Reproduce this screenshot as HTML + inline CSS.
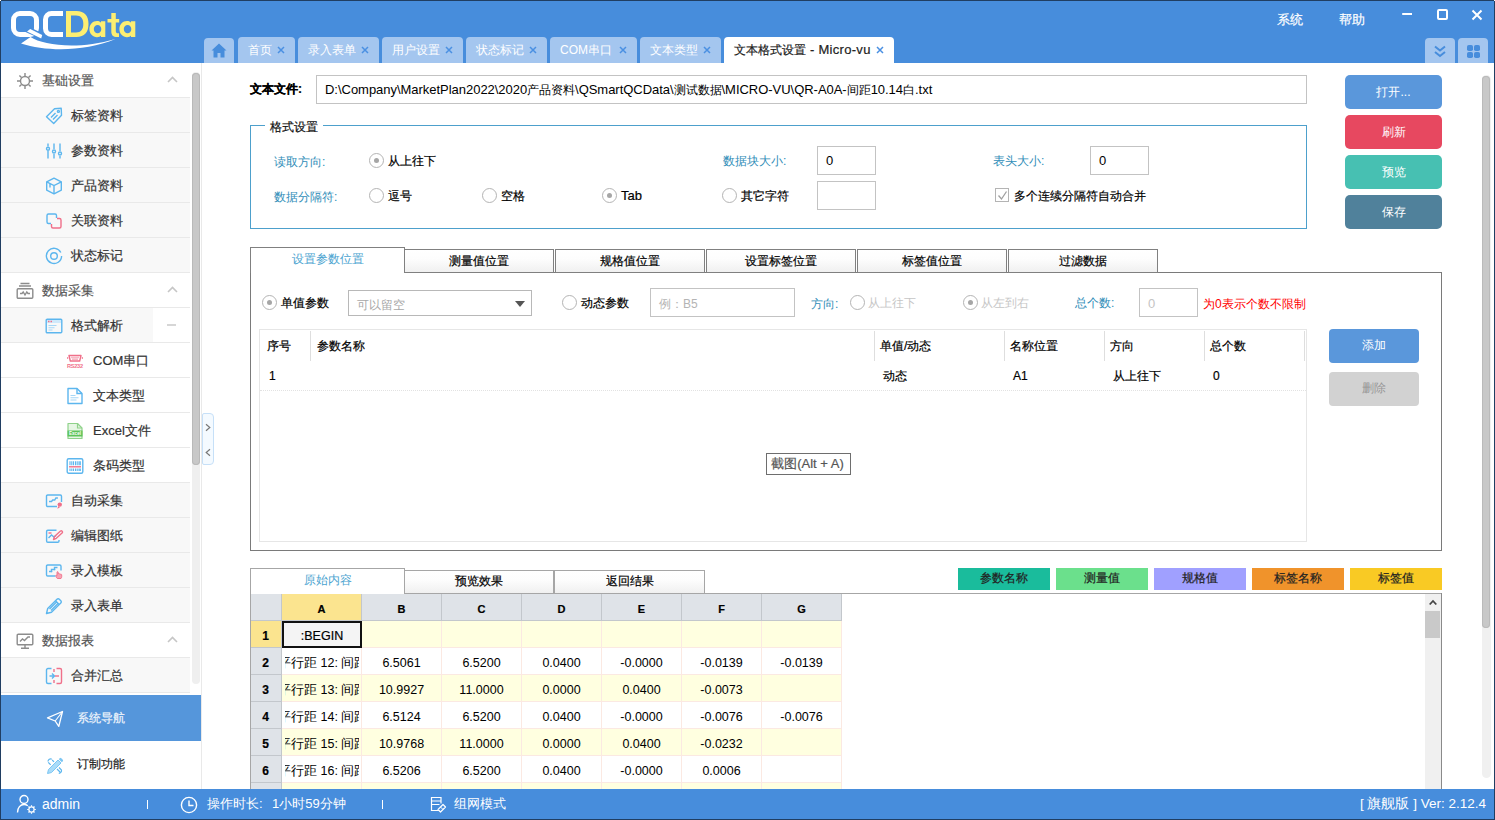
<!DOCTYPE html>
<html lang="zh">
<head>
<meta charset="utf-8">
<title>QCData</title>
<style>
*{box-sizing:border-box;margin:0;padding:0}
html,body{width:1495px;height:820px;overflow:hidden;background:#fff}
body{font-family:"Liberation Sans",sans-serif;font-size:13px;color:#000;position:relative;-webkit-text-stroke:.200px currentColor}
.abs{position:absolute}
.t{position:absolute;white-space:nowrap;line-height:16px;height:16px}
/* header */
#hdr{left:0;top:0;width:1495px;height:63px;background:#478ddc}
.tab{-webkit-text-stroke:0;position:absolute;top:37px;height:26px;background:#a4c6ef;border-radius:4px 4px 0 0;color:#fff;font-size:12px;line-height:26px;white-space:nowrap;padding-left:10px}
.tab .x{position:absolute;right:10.500px;top:9px}
.tab.on{background:#fff;color:#222;-webkit-text-stroke:.200px #222}
/* sidebar */
#side{left:0;top:63px;width:201px;height:726px;background:#fff}
.row{position:absolute;left:0;width:190px;height:35px;border-bottom:1px solid #e9e9e9;background:#f8f8f8;color:#333;font-size:13px}
.row.h{background:#fff;color:#555}
.row .lb{position:absolute;top:10px;line-height:16px;white-space:nowrap}
.row svg{position:absolute}
/* status */
#main .t{margin-top:1px}
.cj{font-size:12px}
#stat{-webkit-text-stroke:0;left:0;top:789px;width:1495px;height:31px;background:#478ddc;color:#fff;font-size:14px}
</style>
</head>
<body>
<!-- HEADER -->
<div id="hdr" class="abs">
  <svg class="abs" style="left:0;top:0" width="240" height="63" viewBox="0 0 240 63">
    <!-- Q -->
    <rect x="13.500" y="13.500" width="23" height="21" rx="6.500" fill="none" stroke="#fff" stroke-width="5"/>
    <path d="M25.500 32l5-4.500 13 6.500-1.500 5.500z" fill="#478ddc"/>
    <path d="M27 31.500l3.200-2.500 12 6-1 3.500z" fill="#fff"/>
    <!-- C -->
    <path d="M63 13.500h-11.500a6 6 0 0 0-6 6v9a6 6 0 0 0 6 6h11.500" fill="none" stroke="#fff" stroke-width="5"/>
    <!-- swoosh -->
    <path d="M21 43.500l9.500-6.500c13 8.500 48 13 85 2c-30 12.500-68 13-94.500 4.500z" fill="#fff"/>
    <!-- D -->
    <path d="M66 11h10.500c8 0 12 5 12 13s-4 13-12 13h-10.500zM71 15.500v17h5c5 0 7.300-3 7.300-8.500s-2.300-8.500-7.300-8.500z" fill="#fcee72" fill-rule="evenodd"/>
    <!-- a -->
    <path d="M97 21c2 0 3.300.7 4 1.700v-1.400h4.300v15.700h-4.300v-1.400c-.7 1-2 1.700-4 1.700-4.300 0-7.600-3.500-7.600-8.200s3.300-8.100 7.600-8.100zM97.600 25c-2.200 0-3.800 1.700-3.800 4.100s1.600 4.200 3.800 4.200 3.700-1.800 3.700-4.200-1.500-4.100-3.700-4.100z" fill="#fcee72" fill-rule="evenodd"/>
    <!-- t -->
    <path d="M111.300 13h4.500v6h3.400v3.600h-3.400v8.400c0 1.800.9 2.500 3.200 2.300v3.700c-5.500.6-7.700-1.300-7.700-5.800v-8.600h-3.800v-3.600h3.800z" fill="#fcee72"/>
    <!-- a -->
    <path d="M127 21c2 0 3.300.7 4 1.700v-1.400h4.300v15.700h-4.300v-1.400c-.7 1-2 1.700-4 1.700-4.300 0-7.600-3.500-7.600-8.200s3.300-8.100 7.600-8.100zM127.600 25c-2.200 0-3.800 1.700-3.800 4.100s1.600 4.200 3.800 4.200 3.700-1.800 3.700-4.200-1.500-4.100-3.700-4.100z" fill="#fcee72" fill-rule="evenodd"/>
  </svg>
  <!-- tabs -->
  <div class="tab" style="left:204px;width:30px;padding:0;top:38px;height:25px">
    <svg class="abs" style="left:7px;top:5px" width="16" height="15" viewBox="0 0 16 15"><path d="M8 0.500l7.500 7h-2v7h-4v-4.500h-3v4.500h-4v-7h-2z" fill="#478ddc"/></svg>
  </div>
  <div class="tab" style="left:238px;width:57px">首页<svg class="x" width="8" height="8" viewBox="0 0 8 8"><path d="M1 1l6 6M7 1l-6 6" stroke="#4a90e2" stroke-width="1.500" fill="none"/></svg></div>
  <div class="tab" style="left:298px;width:81px">录入表单<svg class="x" width="8" height="8" viewBox="0 0 8 8"><path d="M1 1l6 6M7 1l-6 6" stroke="#4a90e2" stroke-width="1.500" fill="none"/></svg></div>
  <div class="tab" style="left:382px;width:81px">用户设置<svg class="x" width="8" height="8" viewBox="0 0 8 8"><path d="M1 1l6 6M7 1l-6 6" stroke="#4a90e2" stroke-width="1.500" fill="none"/></svg></div>
  <div class="tab" style="left:466px;width:81px">状态标记<svg class="x" width="8" height="8" viewBox="0 0 8 8"><path d="M1 1l6 6M7 1l-6 6" stroke="#4a90e2" stroke-width="1.500" fill="none"/></svg></div>
  <div class="tab" style="left:550px;width:87px">COM串口<svg class="x" width="8" height="8" viewBox="0 0 8 8"><path d="M1 1l6 6M7 1l-6 6" stroke="#4a90e2" stroke-width="1.500" fill="none"/></svg></div>
  <div class="tab" style="left:640px;width:81px">文本类型<svg class="x" width="8" height="8" viewBox="0 0 8 8"><path d="M1 1l6 6M7 1l-6 6" stroke="#4a90e2" stroke-width="1.500" fill="none"/></svg></div>
  <div class="tab on" style="left:724px;width:170px">文本格式设置<span style="font-size:13px;letter-spacing:.300px"> - Micro-vu</span><svg class="x" width="8" height="8" viewBox="0 0 8 8"><path d="M1 1l6 6M7 1l-6 6" stroke="#4a90e2" stroke-width="1.500" fill="none"/></svg></div>
  <!-- menu -->
  <div class="t" style="left:1277px;top:12px;color:#fff;font-size:13px">系统</div>
  <div class="t" style="left:1339px;top:12px;color:#fff;font-size:13px">帮助</div>
  <svg class="abs" style="left:1395px;top:5px" width="100" height="20" viewBox="0 0 100 20">
    <path d="M7.200 9h9.800" stroke="#fff" stroke-width="2" fill="none"/>
    <rect x="43" y="5" width="9" height="9" rx="1" fill="none" stroke="#fff" stroke-width="2"/>
    <path d="M77.500 5.500l9 9M86.500 5.500l-9 9" stroke="#fff" stroke-width="2" fill="none"/>
  </svg>
  <div class="tab" style="left:1425px;width:30px;padding:0;top:38px;height:25px">
    <svg class="abs" style="left:9px;top:7px" width="12" height="13" viewBox="0 0 12 13"><path d="M1 1.500l5 4 5-4M1 7l5 4 5-4" stroke="#478ddc" stroke-width="2" fill="none"/></svg>
  </div>
  <div class="tab" style="left:1458px;width:30px;padding:0;top:38px;height:25px">
    <svg class="abs" style="left:9px;top:7px" width="13" height="13" viewBox="0 0 13 13"><rect x="0" y="0" width="6" height="6" rx="1.800" fill="#478ddc"/><rect x="7" y="0" width="6" height="6" rx="1.800" fill="#478ddc"/><rect x="0" y="7" width="6" height="6" rx="1.800" fill="#478ddc"/><rect x="7" y="7" width="6" height="6" rx="1.800" fill="#478ddc"/></svg>
  </div>
</div>

<!-- SIDEBAR -->
<div id="side" class="abs">
<style>
.ic{position:absolute;top:9px;width:18px;height:18px;overflow:visible}
.bl{stroke:#5cb6ee;fill:none;stroke-width:1.4}
.pk{stroke:#f0708a;fill:none;stroke-width:1.4}
.gy{stroke:#8c8c8c;fill:none;stroke-width:1.4}
.chev{position:absolute;left:167px;top:13px}
</style>
<!-- 0 基础设置 -->
<div class="row h" style="top:0">
 <svg class="ic" style="left:16px" viewBox="0 0 18 18"><circle cx="9" cy="9" r="4.500" class="gy" stroke-width="1.900"/><path d="M9 1v3M9 14v3M1 9h3M14 9h3M3.400 3.400l2.100 2.100M12.500 12.500l2.100 2.100M3.400 14.600l2.100-2.100M12.500 5.500l2.100-2.100" class="gy" stroke-width="1.900"/></svg>
 <span class="lb" style="left:42px">基础设置</span>
 <svg class="chev" width="11" height="7" viewBox="0 0 11 7"><path d="M1 6l4.500-4.500 4.500 4.500" stroke="#c6c6c6" stroke-width="1.600" fill="none"/></svg>
</div>
<!-- 1 标签资料 -->
<div class="row" style="top:35px">
 <svg class="ic" style="left:45px" viewBox="0 0 18 18"><path d="M9.500 1.800l6.700-.5.300 7-7.800 8.200-7.200-6.800z" class="bl" stroke-linejoin="round"/><circle cx="13.400" cy="4.400" r="1" class="bl" stroke-width="1"/><path d="M6 10.500l4.500-4.500M8 12.500l4.500-4.500" class="bl"/></svg>
 <span class="lb" style="left:71px">标签资料</span>
</div>
<!-- 2 参数资料 -->
<div class="row" style="top:70px">
 <svg class="ic" style="left:45px" viewBox="0 0 18 18"><path d="M3 1.500v3M3 9v7.500M9 1.500v5.500M9 12v4.500M15 1.500v7.500M15 14v2.500" class="bl" stroke-width="1.500"/><circle cx="3" cy="6.700" r="1.500" class="bl"/><circle cx="9" cy="9.500" r="1.500" class="bl"/><circle cx="15" cy="11.500" r="1.500" class="bl"/></svg>
 <span class="lb" style="left:71px">参数资料</span>
</div>
<!-- 3 产品资料 -->
<div class="row" style="top:105px">
 <svg class="ic" style="left:45px" viewBox="0 0 18 18"><path d="M9 1.200l7.300 3.600v8.400l-7.300 3.600-7.300-3.600v-8.400z" class="bl" stroke-linejoin="round"/><path d="M1.700 4.800l7.300 3.700 7.300-3.700M9 8.500v8M5 6.500v4" class="bl"/></svg>
 <span class="lb" style="left:71px">产品资料</span>
</div>
<!-- 4 关联资料 -->
<div class="row" style="top:140px">
 <svg class="ic" style="left:45px" viewBox="0 0 18 18"><path d="M6 11.500h-2.500a1.500 1.500 0 0 1-1.500-1.500v-6.500a1.500 1.500 0 0 1 1.500-1.500h6.500a1.500 1.500 0 0 1 1.500 1.500v2.500" class="bl"/><path d="M12 6.500h2.500a1.500 1.500 0 0 1 1.500 1.500v6.500a1.500 1.500 0 0 1-1.500 1.500h-6.500a1.500 1.500 0 0 1-1.500-1.500v-2.500" class="pk"/></svg>
 <span class="lb" style="left:71px">关联资料</span>
</div>
<!-- 5 状态标记 -->
<div class="row" style="top:175px">
 <svg class="ic" style="left:45px" viewBox="0 0 18 18"><path d="M15.800 5.500a7.600 7.600 0 1 0 .8 3.500" class="bl" stroke-width="1.600"/><circle cx="9" cy="9" r="3.300" class="bl" stroke-width="1.600"/></svg>
 <span class="lb" style="left:71px">状态标记</span>
</div>
<!-- 6 数据采集 -->
<div class="row h" style="top:210px">
 <svg class="ic" style="left:16px" viewBox="0 0 18 18"><path d="M4.500 1.500h9M3 4h12" class="gy" stroke-width="1.200"/><rect x="1.200" y="6.700" width="15.600" height="9.600" rx="1" class="gy"/><path d="M4 11.500h2l1.200-1.500 1.800 3 1.800-3 1.200 1.500h2" class="gy" stroke-width="1.100"/></svg>
 <span class="lb" style="left:42px">数据采集</span>
 <svg class="chev" width="11" height="7" viewBox="0 0 11 7"><path d="M1 6l4.500-4.500 4.500 4.500" stroke="#c6c6c6" stroke-width="1.600" fill="none"/></svg>
</div>
<!-- 7 格式解析 -->
<div class="row" style="top:245px;background:#fff">
 <div class="abs" style="left:0;top:0;width:153px;height:34px;background:#f8f8f8"></div>
 <svg class="ic" style="left:45px" viewBox="0 0 18 18"><rect x="1.200" y="2.200" width="15.600" height="13.600" rx="1" class="bl" fill="#f2f9fe"/><rect x="2" y="3" width="14" height="3" fill="#cfe9fb"/><path d="M3 4.500h1.500M5.500 4.500h1.500" class="pk" stroke-width="1.300"/><path d="M3.500 8.500h8M3.500 10.800h6M3.500 13h4" stroke="#a6d7f6" fill="none" stroke-width="1.100"/></svg>
 <span class="lb" style="left:71px">格式解析</span>
 <div class="abs" style="left:167px;top:16px;width:9px;height:2px;background:#d6d6d6"></div>
</div>
<!-- 8 COM串口 -->
<div class="row" style="top:280px;background:#fff">
 <svg class="ic" style="left:66px" viewBox="0 0 18 18"><path d="M3 3.500h12l-1.300 5.500h-9.400z" class="pk" stroke-linejoin="round" stroke-width="1.200"/><path d="M1 6h1.200M15.800 6h1.200" class="pk" stroke-width="1.600"/><path d="M5.500 5.500h7M6.500 7.300h5" class="pk" stroke-width=".9" stroke-dasharray="1 1"/><text x="9" y="15.800" font-family="Liberation Sans" font-weight="bold" font-size="5.600" fill="#f0708a" text-anchor="middle" textLength="16">RS232</text></svg>
 <span class="lb" style="left:93px">COM串口</span>
</div>
<!-- 9 文本类型 -->
<div class="row" style="top:315px;background:#fff">
 <svg class="ic" style="left:66px" viewBox="0 0 18 18"><path d="M2 1.500h9l5 5v10h-14z" class="bl" fill="#eef7fe" stroke-linejoin="round"/><path d="M11 1.500v5h5" class="bl"/><path d="M4.500 8.500h5M4.500 10.800h8M4.500 13h6" stroke="#a6d7f6" fill="none" stroke-width="1.100"/></svg>
 <span class="lb" style="left:93px">文本类型</span>
</div>
<!-- 10 Excel文件 -->
<div class="row" style="top:350px;background:#fff">
 <svg class="ic" style="left:66px" viewBox="0 0 18 18"><path d="M2 1.500h9.500l4.500 4.500v10.500h-14z" fill="#e6f6e4" stroke="#8fd28a" stroke-width="1.200" stroke-linejoin="round"/><path d="M11.500 1.500v4.500h4.500" stroke="#8fd28a" fill="none" stroke-width="1.200"/><rect x="1.500" y="8.500" width="15" height="6" fill="#5ec45a"/><text x="9" y="13.300" font-family="Liberation Sans" font-weight="bold" font-size="4.600" fill="#fff" text-anchor="middle">Excel</text></svg>
 <span class="lb" style="left:93px">Excel文件</span>
</div>
<!-- 11 条码类型 -->
<div class="row" style="top:385px;background:#fff">
 <svg class="ic" style="left:66px" viewBox="0 0 18 18"><rect x="1.200" y="1.700" width="15.600" height="14.600" rx="1.500" class="bl"/><path d="M4 4.200v4M5.800 4.200v4M7.500 4.200v4M9.500 4.200v4M11.200 4.200v4M13 4.200v4M14.300 4.200v4" stroke="#5cb6ee" stroke-width="1.100"/><path d="M3 9.800h12" class="pk" stroke-width="1.600"/><path d="M4 11.500v2.500M5.800 11.500v2.500M7.500 11.500v2.500M9.500 11.500v2.500M11.200 11.500v2.500M13 11.500v2.500M14.300 11.500v2.500" stroke="#5cb6ee" stroke-width="1.100"/></svg>
 <span class="lb" style="left:93px">条码类型</span>
</div>
<!-- 12 自动采集 -->
<div class="row" style="top:420px">
 <svg class="ic" style="left:45px" viewBox="0 0 18 18"><path d="M12 14.500h-9.300a1.200 1.200 0 0 1-1.200-1.200v-9.100a1.200 1.200 0 0 1 1.200-1.200h12.600a1.200 1.200 0 0 1 1.200 1.200v5.800" class="bl"/><path d="M4 9.500h2.500l1.200-1.500h2l1.200-2h2" class="bl" stroke-width="1.100"/><circle cx="14.800" cy="12.600" r="2.200" fill="#f0708a"/><path d="M13.300 14l-1 2.800 2.600-1.200z" fill="#f0708a"/></svg>
 <span class="lb" style="left:71px">自动采集</span>
</div>
<!-- 13 编辑图纸 -->
<div class="row" style="top:455px">
 <svg class="ic" style="left:45px" viewBox="0 0 18 18"><path d="M14 13v1a1.200 1.200 0 0 1-1.200 1.200h-10a1.200 1.200 0 0 1-1.200-1.200v-9.500a1.200 1.200 0 0 1 1.200-1.200h8.700" class="bl"/><path d="M3.500 11l3-3 2.500 2 2-1.500" class="bl" stroke-width="1.100"/><path d="M8.500 12.500l1-3 6-5.500a1.300 1.300 0 0 1 1.800 1.800l-6 5.500z" class="pk" stroke-width="1.200" stroke-linejoin="round"/><path d="M3.500 6h3" class="pk" stroke-width="1.100"/></svg>
 <span class="lb" style="left:71px">编辑图纸</span>
</div>
<!-- 14 录入模板 -->
<div class="row" style="top:490px">
 <svg class="ic" style="left:45px" viewBox="0 0 18 18"><path d="M10.500 14h-7.800a1.200 1.200 0 0 1-1.200-1.200v-8.600a1.200 1.200 0 0 1 1.200-1.200h12.100a1.200 1.200 0 0 1 1.200 1.200v4.300" class="bl"/><path d="M4 9.500h2.500v-2h3v-2h3" class="bl" stroke-width="1.100"/><circle cx="6.500" cy="9.500" r=".8" fill="#5cb6ee"/><circle cx="9.500" cy="7.500" r=".8" fill="#5cb6ee"/><path d="M12.300 16.500c-1.500-1.500-1.800-3-1-3.500l.7.600v-3.300c0-.9 1.200-.9 1.200 0v1.500c.5-.5 1.100-.3 1.200.2.500-.4 1.100-.1 1.200.3.700-.3 1.100.1 1.100.7v1.700c0 .8-.3 1.300-.7 1.800z" fill="#f6a4b4" stroke="#f0708a" stroke-width=".9" stroke-linejoin="round"/></svg>
 <span class="lb" style="left:71px">录入模板</span>
</div>
<!-- 15 录入表单 -->
<div class="row" style="top:525px">
 <svg class="ic" style="left:45px" viewBox="0 0 18 18"><path d="M1.500 16.500l1.200-5 9.300-9.300a1.600 1.600 0 0 1 2.300 0l1.500 1.500a1.600 1.600 0 0 1 0 2.300l-9.300 9.300z" class="bl" fill="#e3f2fc" stroke-linejoin="round" stroke-width="1.500"/><path d="M10.500 3.800l3.700 3.700M4.500 12l7-7M6 13.500l7-7" class="bl" stroke-width="1"/></svg>
 <span class="lb" style="left:71px">录入表单</span>
</div>
<!-- 16 数据报表 -->
<div class="row h" style="top:560px">
 <svg class="ic" style="left:16px" viewBox="0 0 18 18"><rect x="1.200" y="2.200" width="15.600" height="10.600" rx="1" class="gy"/><path d="M9 13v2.800M5 16.200h8" class="gy" stroke-width="1.500"/><path d="M4 9.500l2.500-2.500 2 1.500 3.500-3.500h2" class="gy" stroke-width="1.100"/></svg>
 <span class="lb" style="left:42px">数据报表</span>
 <svg class="chev" width="11" height="7" viewBox="0 0 11 7"><path d="M1 6l4.500-4.500 4.500 4.500" stroke="#c6c6c6" stroke-width="1.600" fill="none"/></svg>
</div>
<!-- 17 合并汇总 -->
<div class="row" style="top:595px">
 <svg class="ic" style="left:45px" viewBox="0 0 18 18"><path d="M6.500 1.500h-3.500a1.500 1.500 0 0 0-1.500 1.500v12a1.500 1.500 0 0 0 1.500 1.500h3.500" class="bl" stroke-width="1.500"/><path d="M11.500 1.500h3.500a1.500 1.500 0 0 1 1.500 1.500v12a1.500 1.500 0 0 1-1.500 1.500h-3.500" class="pk" stroke-width="1.500"/><path d="M4.500 9h4.500M7 6.500l2.500 2.500-2.500 2.500" class="bl" stroke-width="1.200"/><path d="M14 9h-4" class="pk" stroke-width="1.200"/><path d="M9 2v3M9 13v3" class="pk" stroke-width="1.200"/></svg>
 <span class="lb" style="left:71px">合并汇总</span>
</div>
<!-- scroll -->
<div class="abs" style="left:192px;top:9px;width:8px;height:612px;background:#efefef;border-radius:4px"></div>
<div class="abs" style="left:192px;top:10px;width:8px;height:392px;background:#c8c8c8;border-radius:4px;box-shadow:inset 0 0 0 1px #b9b9b9"></div>
<div class="abs" style="left:202px;top:350px;width:12px;height:52px;background:#f4faff;border:1px solid #c6e0f8;border-radius:2px 4px 4px 2px"></div>
<svg class="abs" style="left:205px;top:360px" width="6" height="34" viewBox="0 0 6 34"><path d="M1 1.200l3.800 3.300-3.800 3.300M5 26.200l-3.800 3.300 3.800 3.300" stroke="#777" stroke-width="1.200" fill="none"/></svg>
<!-- bottom nav -->
<div class="abs" style="left:0;top:632px;width:201px;height:46px;background:#5596db"></div>
<svg class="abs" style="left:46px;top:647px" width="18" height="18" viewBox="0 0 18 18"><path d="M1.500 7.800l15-6.300-3.700 14.800-3.600-5.300z" fill="none" stroke="#fff" stroke-width="1.300" stroke-linejoin="round"/><path d="M9.200 11l7.300-9.500" stroke="#fff" stroke-width="1.100"/></svg>
<div class="t" style="left:77px;top:647px;color:#eef4fb;font-size:12px">系统导航</div>
<svg class="abs" style="left:46px;top:694px" width="18" height="18" viewBox="0 0 18 18"><path d="M1.500 16.500l1-4 9.500-9.500 3 3-9.500 9.500z" fill="#a9dcf9" stroke="#7cc6f3" stroke-width="1" stroke-linejoin="round"/><path d="M12.800 2.200l1-1a1 1 0 0 1 1.400 0l1.600 1.600a1 1 0 0 1 0 1.400l-1 1z" fill="#7cc6f3"/><path d="M2 4.500a2.600 2.600 0 0 1 3.800-2.300M2.200 5.300l2.500 2.500M6.200 3l1.800 1.800M11 12l3 3M13 10.500l2.300 2.300a2.600 2.600 0 0 1-2.500 3.500" fill="none" stroke="#5cb6ee" stroke-width="1.200"/></svg>
<div class="t" style="left:77px;top:693px;color:#222;font-size:12px">订制功能</div>
<div class="abs" style="left:201px;top:0;width:1px;height:726px;background:#e9e9e9"></div>

</div>

<!-- MAIN -->
<div id="main" class="abs" style="left:0;top:0;width:0;height:0">
<style>
.lbl{color:#2f8db8;-webkit-text-stroke:0}
.ns{-webkit-text-stroke:0}
.inp{position:absolute;border:1px solid #c3c3c3;background:#fff;font-size:13px;line-height:16px;white-space:nowrap}
.btn{-webkit-text-stroke:0;position:absolute;border-radius:5px;color:#fff;text-align:center;font-size:12px}
.rad{position:absolute;width:15px;height:15px;border:1px solid #b4b4b4;border-radius:50%;background:#fff}
.rad.c:after{content:"";position:absolute;left:4px;top:4px;width:5px;height:5px;border-radius:50%;background:#a6a6a6}
.tb{position:absolute;top:249px;height:24px;border:1px solid #808080;background:linear-gradient(#fff,#fdfdfd 40%,#f0f0f0);font-size:12px;text-align:center;line-height:23px;color:#000}
.tb.on{-webkit-text-stroke:0;top:247px;height:26px;border-bottom:none;background:#fff;color:#4aa3d0;line-height:23px}
</style>
<!-- file row -->
<div class="t" style="left:250px;top:80px;font-weight:bold;font-size:12px">文本文件:</div>
<div class="inp" style="left:316px;top:75px;width:991px;height:29px"><span id="pathtx" class="t ns" style="left:8px;top:5px;font-size:13px;letter-spacing:-.030px">D:\Company\MarketPlan2022\2020<span class="cj">产品资料</span>\QSmartQCData\<span class="cj">测试数据</span>\MICRO-VU\QR-A0A-<span class="cj">间距</span>10.14<span class="cj">白</span>.txt</span></div>
<!-- right buttons -->
<div class="btn" style="left:1345px;top:75px;width:97px;height:34px;background:#5a97db;line-height:34px">打开...</div>
<div class="btn" style="left:1345px;top:115px;width:97px;height:34px;background:#e74860;line-height:34px">刷新</div>
<div class="btn" style="left:1345px;top:155px;width:97px;height:34px;background:#47c0b2;line-height:34px">预览</div>
<div class="btn" style="left:1345px;top:195px;width:97px;height:34px;background:#50819b;line-height:34px">保存</div>
<!-- groupbox -->
<div class="abs" style="left:250px;top:125px;width:1057px;height:104px;border:1px solid #4da0cc"></div>
<div class="t" style="left:265px;top:118px;width:58px;background:#fff;text-align:center;font-size:12px;color:#111">格式设置</div>
<div class="t lbl" style="left:274px;top:153px;font-size:12px">读取方向:</div>
<div class="rad c" style="left:369px;top:153px"></div>
<div class="t" style="left:388px;top:152px;font-size:12px">从上往下</div>
<div class="t lbl" style="left:723px;top:152px;font-size:12px">数据块大小:</div>
<div class="inp" style="left:817px;top:146px;width:59px;height:29px"><span class="t ns" style="left:8px;top:5px">0</span></div>
<div class="t lbl" style="left:993px;top:152px;font-size:12px">表头大小:</div>
<div class="inp" style="left:1090px;top:146px;width:59px;height:29px"><span class="t ns" style="left:8px;top:5px">0</span></div>
<div class="t lbl" style="left:274px;top:188px;font-size:12px">数据分隔符:</div>
<div class="rad" style="left:369px;top:188px"></div>
<div class="t" style="left:388px;top:187px;font-size:12px">逗号</div>
<div class="rad" style="left:482px;top:188px"></div>
<div class="t" style="left:501px;top:187px;font-size:12px">空格</div>
<div class="rad c" style="left:602px;top:188px"></div>
<div class="t" style="left:621px;top:187px;font-size:13px">Tab</div>
<div class="rad" style="left:722px;top:188px"></div>
<div class="t" style="left:741px;top:187px;font-size:12px">其它字符</div>
<div class="inp" style="left:817px;top:181px;width:59px;height:29px"></div>
<div class="abs" style="left:995px;top:188px;width:14px;height:14px;border:1px solid #b4b4b4;background:#fff"><svg class="abs" style="left:1px;top:1px" width="11" height="11" viewBox="0 0 11 11"><path d="M1.500 5.500l3 3.500 5-7.500" stroke="#a0a0a0" stroke-width="1.300" fill="none"/></svg></div>
<div class="t" style="left:1014px;top:187px;font-size:12px">多个连续分隔符自动合并</div>
<!-- tab control 1 -->
<div class="abs" style="left:250px;top:272px;width:1192px;height:279px;border:1px solid #7a7a7a;background:#fff"></div>
<div class="tb" style="left:404px;width:150px">测量值位置</div>
<div class="tb" style="left:555px;width:150px">规格值位置</div>
<div class="tb" style="left:706px;width:150px">设置标签位置</div>
<div class="tb" style="left:857px;width:150px">标签值位置</div>
<div class="tb" style="left:1008px;width:150px">过滤数据</div>
<div class="tb on" style="left:250px;width:155px">设置参数位置</div>
<!-- row of controls -->
<div class="rad c" style="left:262px;top:295px"></div>
<div class="t" style="left:281px;top:294px;font-size:12px">单值参数</div>
<div class="inp" style="left:348px;top:290px;width:184px;height:26px;border-color:#b8b8b8"><span class="t" style="left:8px;top:5px;color:#a8a8a8;font-size:12px;-webkit-text-stroke:0">可以留空</span><svg class="abs" style="left:166px;top:10px" width="10" height="6" viewBox="0 0 10 6"><path d="M0 0h10l-5 6z" fill="#555"/></svg></div>
<div class="rad" style="left:562px;top:295px"></div>
<div class="t" style="left:581px;top:294px;font-size:12px">动态参数</div>
<div class="inp" style="left:650px;top:288px;width:145px;height:29px"><span class="t" style="left:8px;top:6px;color:#b4b4b4;font-size:12px;-webkit-text-stroke:0">例：B5</span></div>
<div class="t lbl" style="left:811px;top:295px;font-size:12px">方向:</div>
<div class="rad" style="left:850px;top:295px"></div>
<div class="t" style="left:868px;top:294px;font-size:12px;color:#c6c6c6;-webkit-text-stroke:0">从上往下</div>
<div class="rad c" style="left:963px;top:295px"></div>
<div class="t" style="left:981px;top:294px;font-size:12px;color:#c6c6c6;-webkit-text-stroke:0">从左到右</div>
<div class="t lbl" style="left:1075px;top:294px;font-size:12px">总个数:</div>
<div class="inp" style="left:1139px;top:288px;width:59px;height:29px"><span class="t" style="left:8px;top:6px;color:#c4c4c4;-webkit-text-stroke:0">0</span></div>
<div class="t" style="left:1203px;top:295px;font-size:12px;color:#f00;-webkit-text-stroke:0">为0表示个数不限制</div>
<!-- grid -->
<div class="abs" style="left:259px;top:329px;width:1048px;height:213px;border:1px solid #e6e6e6;background:#fff"></div>
<div class="abs" style="left:310px;top:331px;width:1px;height:30px;background:#dedede"></div>
<div class="abs" style="left:874px;top:331px;width:1px;height:30px;background:#dedede"></div>
<div class="abs" style="left:1004px;top:331px;width:1px;height:30px;background:#dedede"></div>
<div class="abs" style="left:1104px;top:331px;width:1px;height:30px;background:#dedede"></div>
<div class="abs" style="left:1204px;top:331px;width:1px;height:30px;background:#dedede"></div>
<div class="abs" style="left:1304px;top:331px;width:1px;height:30px;background:#dedede"></div>
<div class="t" style="left:267px;top:337px;font-size:12px">序号</div>
<div class="t" style="left:317px;top:337px;font-size:12px">参数名称</div>
<div class="t" style="left:880px;top:337px;font-size:12px">单值/动态</div>
<div class="t" style="left:1010px;top:337px;font-size:12px">名称位置</div>
<div class="t" style="left:1110px;top:337px;font-size:12px">方向</div>
<div class="t" style="left:1210px;top:337px;font-size:12px">总个数</div>
<div class="t" style="left:269px;top:367px;font-size:12px">1</div>
<div class="t" style="left:883px;top:367px;font-size:12px">动态</div>
<div class="t" style="left:1013px;top:367px;font-size:12px">A1</div>
<div class="t" style="left:1113px;top:367px;font-size:12px">从上往下</div>
<div class="t" style="left:1213px;top:367px;font-size:12px">0</div>
<div class="abs" style="left:260px;top:390px;width:1046px;height:0;border-top:1px dotted #e2e2e2"></div>
<div class="btn" style="left:1329px;top:329px;width:90px;height:34px;background:#5a97db;line-height:33px;border-radius:4px">添加</div>
<div class="btn" style="left:1329px;top:372px;width:90px;height:34px;background:#d2d2d2;color:#979797;line-height:33px;border-radius:4px">删除</div>
<div class="abs" style="left:766px;top:453px;width:85px;height:22px;border:1px solid #6e6e6e;background:#fff;font-size:13px;line-height:20px;text-indent:-2px;text-align:center;color:#555;white-space:nowrap">截图(Alt + A)</div>

<style>
.tb2{position:absolute;top:570px;height:24px;border:1px solid #a6a6a6;background:linear-gradient(#fff,#fdfdfd 40%,#f0f0f0);font-size:12px;text-align:center;line-height:21px;color:#000}
.tb2.on{-webkit-text-stroke:0;top:568px;height:26px;border-bottom:none;background:#fff;color:#4aa3d0;line-height:23px}
.lg{position:absolute;top:568px;width:92px;height:22px;font-size:12px;text-align:center;line-height:21px;color:#222}
.hc{position:absolute;top:594px;height:27px;background:#dfe3e8;border-right:1px solid #c3c7cc;border-bottom:1px solid #c3c7cc;font-weight:bold;font-size:11px;text-align:center;line-height:30px;color:#000}
.rh{position:absolute;left:250px;width:32px;height:27px;background:#dfe3e8;border-right:1px solid #c3c7cc;border-bottom:1px solid #c3c7cc;font-weight:bold;font-size:12px;text-align:center;line-height:30px}
.cl{-webkit-text-stroke:0;position:absolute;height:27px;width:80px;border-right:1px solid #fbe9e2;border-bottom:1px solid #fbe9e2;font-size:12.500px;text-align:center;line-height:31px;overflow:hidden;white-space:nowrap}
</style>
<div class="abs" style="left:250px;top:593px;width:1192px;height:1px;background:#a6a6a6"></div>
<div class="abs" style="left:1441px;top:593px;width:1px;height:196px;background:#8a8a8a"></div>
<div class="abs" style="left:250px;top:593px;width:1px;height:196px;background:#a6a6a6;z-index:3"></div>
<div class="tb2" style="left:404px;width:150px">预览效果</div>
<div class="tb2" style="left:554px;width:151px">返回结果</div>
<div class="tb2 on" style="left:250px;width:155px">原始内容</div>
<div class="lg" style="left:958px;background:#1abc9c">参数名称</div>
<div class="lg" style="left:1056px;background:#6be08c">测量值</div>
<div class="lg" style="left:1154px;background:#a0a0ff">规格值</div>
<div class="lg" style="left:1252px;background:#f0932b">标签名称</div>
<div class="lg" style="left:1350px;background:#f9ca24">标签值</div>
<div class="abs" style="left:0;top:0;width:1495px;height:789px;overflow:hidden;pointer-events:none">
<div class="hc" style="left:250px;width:32px"></div>
<div class="hc" style="left:282px;width:80px;background:#fbe48f">A</div>
<div class="hc" style="left:362px;width:80px">B</div>
<div class="hc" style="left:442px;width:80px">C</div>
<div class="hc" style="left:522px;width:80px">D</div>
<div class="hc" style="left:602px;width:80px">E</div>
<div class="hc" style="left:682px;width:80px">F</div>
<div class="hc" style="left:762px;width:80px">G</div>
<div class="rh" style="top:621px;background:#fbe48f">1</div>
<div class="cl" style="left:282px;top:621px;background:#ffffe0">:BEGIN</div>
<div class="cl" style="left:362px;top:621px;background:#ffffe0"></div>
<div class="cl" style="left:442px;top:621px;background:#ffffe0"></div>
<div class="cl" style="left:522px;top:621px;background:#ffffe0"></div>
<div class="cl" style="left:602px;top:621px;background:#ffffe0"></div>
<div class="cl" style="left:682px;top:621px;background:#ffffe0"></div>
<div class="cl" style="left:762px;top:621px;background:#ffffe0"></div>
<div class="rh" style="top:648px">2</div>
<div class="cl" style="left:282px;top:648px;background:#fff"><div class="abs" style="left:2.500px;top:0;width:74.500px;height:26px;overflow:hidden"><span style="position:absolute;left:50%;top:0;transform:translateX(calc(-50% + 1px));white-space:nowrap">平行距 12: 间距</span></div></div>
<div class="cl" style="left:362px;top:648px;background:#fff">6.5061</div>
<div class="cl" style="left:442px;top:648px;background:#fff">6.5200</div>
<div class="cl" style="left:522px;top:648px;background:#fff">0.0400</div>
<div class="cl" style="left:602px;top:648px;background:#fff">-0.0000</div>
<div class="cl" style="left:682px;top:648px;background:#fff">-0.0139</div>
<div class="cl" style="left:762px;top:648px;background:#fff">-0.0139</div>
<div class="rh" style="top:675px">3</div>
<div class="cl" style="left:282px;top:675px;background:#ffffe0"><div class="abs" style="left:2.500px;top:0;width:74.500px;height:26px;overflow:hidden"><span style="position:absolute;left:50%;top:0;transform:translateX(calc(-50% + 1px));white-space:nowrap">平行距 13: 间距</span></div></div>
<div class="cl" style="left:362px;top:675px;background:#ffffe0">10.9927</div>
<div class="cl" style="left:442px;top:675px;background:#ffffe0">11.0000</div>
<div class="cl" style="left:522px;top:675px;background:#ffffe0">0.0000</div>
<div class="cl" style="left:602px;top:675px;background:#ffffe0">0.0400</div>
<div class="cl" style="left:682px;top:675px;background:#ffffe0">-0.0073</div>
<div class="cl" style="left:762px;top:675px;background:#ffffe0"></div>
<div class="rh" style="top:702px">4</div>
<div class="cl" style="left:282px;top:702px;background:#fff"><div class="abs" style="left:2.500px;top:0;width:74.500px;height:26px;overflow:hidden"><span style="position:absolute;left:50%;top:0;transform:translateX(calc(-50% + 1px));white-space:nowrap">平行距 14: 间距</span></div></div>
<div class="cl" style="left:362px;top:702px;background:#fff">6.5124</div>
<div class="cl" style="left:442px;top:702px;background:#fff">6.5200</div>
<div class="cl" style="left:522px;top:702px;background:#fff">0.0400</div>
<div class="cl" style="left:602px;top:702px;background:#fff">-0.0000</div>
<div class="cl" style="left:682px;top:702px;background:#fff">-0.0076</div>
<div class="cl" style="left:762px;top:702px;background:#fff">-0.0076</div>
<div class="rh" style="top:729px">5</div>
<div class="cl" style="left:282px;top:729px;background:#ffffe0"><div class="abs" style="left:2.500px;top:0;width:74.500px;height:26px;overflow:hidden"><span style="position:absolute;left:50%;top:0;transform:translateX(calc(-50% + 1px));white-space:nowrap">平行距 15: 间距</span></div></div>
<div class="cl" style="left:362px;top:729px;background:#ffffe0">10.9768</div>
<div class="cl" style="left:442px;top:729px;background:#ffffe0">11.0000</div>
<div class="cl" style="left:522px;top:729px;background:#ffffe0">0.0000</div>
<div class="cl" style="left:602px;top:729px;background:#ffffe0">0.0400</div>
<div class="cl" style="left:682px;top:729px;background:#ffffe0">-0.0232</div>
<div class="cl" style="left:762px;top:729px;background:#ffffe0"></div>
<div class="rh" style="top:756px">6</div>
<div class="cl" style="left:282px;top:756px;background:#fff"><div class="abs" style="left:2.500px;top:0;width:74.500px;height:26px;overflow:hidden"><span style="position:absolute;left:50%;top:0;transform:translateX(calc(-50% + 1px));white-space:nowrap">平行距 16: 间距</span></div></div>
<div class="cl" style="left:362px;top:756px;background:#fff">6.5206</div>
<div class="cl" style="left:442px;top:756px;background:#fff">6.5200</div>
<div class="cl" style="left:522px;top:756px;background:#fff">0.0400</div>
<div class="cl" style="left:602px;top:756px;background:#fff">-0.0000</div>
<div class="cl" style="left:682px;top:756px;background:#fff">0.0006</div>
<div class="cl" style="left:762px;top:756px;background:#fff"></div>
<div class="rh" style="top:783px">7</div>
<div class="cl" style="left:282px;top:783px;background:#ffffe0;text-align:left;text-indent:-8px"></div>
<div class="cl" style="left:362px;top:783px;background:#ffffe0"></div>
<div class="cl" style="left:442px;top:783px;background:#ffffe0"></div>
<div class="cl" style="left:522px;top:783px;background:#ffffe0"></div>
<div class="cl" style="left:602px;top:783px;background:#ffffe0"></div>
<div class="cl" style="left:682px;top:783px;background:#ffffe0"></div>
<div class="cl" style="left:762px;top:783px;background:#ffffe0"></div>
<div class="abs" style="left:282px;top:621px;width:80px;height:27px;border:2px solid #111;background:#f4f4f4;font-size:12.500px;text-align:center;line-height:27px">:BEGIN</div>
</div>
<div class="abs" style="left:1425px;top:594px;width:16px;height:195px;background:#f0f0f0"></div>
<svg class="abs" style="left:1429px;top:599px" width="8" height="7" viewBox="0 0 8 7"><path d="M.700 5.500l3.300-3.500 3.300 3.500" stroke="#444" stroke-width="1.800" fill="none"/></svg>
<div class="abs" style="left:1425px;top:611px;width:15px;height:27px;background:#c9c9c9"></div>
<div class="abs" style="left:1482px;top:75px;width:9px;height:703px;background:#f0f0f0;border-radius:4.500px"></div>
<div class="abs" style="left:1482px;top:76px;width:8px;height:552px;background:#c8c8c8;border-radius:4px;box-shadow:inset 0 0 0 1px #bababa"></div>
</div>

<!-- STATUS -->
<div id="stat" class="abs">

<svg class="abs" style="left:16px;top:5px" width="22" height="21" viewBox="0 0 22 21"><circle cx="8" cy="5.500" r="4" fill="none" stroke="#fff" stroke-width="1.400"/><path d="M1.500 18.500c0-5 3-8 6.500-8 1.500 0 2.800.5 3.800 1.300" fill="none" stroke="#fff" stroke-width="1.400"/><circle cx="15.500" cy="15.500" r="2.600" fill="none" stroke="#fff" stroke-width="1.200"/><path d="M15.500 11.200v1.500M15.500 18.300v1.500M11.200 15.500h1.500M18.300 15.500h1.500M12.500 12.500l1 1M17.500 17.500l1 1M12.500 18.500l1-1M17.500 13.500l1-1" stroke="#fff" stroke-width="1.200"/></svg>
<div class="t" style="left:42px;top:7px;font-size:14px">admin</div>
<div class="abs" style="left:147px;top:11px;width:1px;height:9px;background:#fff"></div>
<svg class="abs" style="left:180px;top:7px" width="18" height="18" viewBox="0 0 18 18"><circle cx="9" cy="9" r="7.600" fill="none" stroke="#fff" stroke-width="1.400"/><path d="M9 4.500v5h4.500" fill="none" stroke="#fff" stroke-width="1.400"/></svg>
<div class="t" style="left:207px;top:7px;font-size:13px">操作时长:</div><div class="t" style="left:272px;top:7px;font-size:13px">1小时59分钟</div>
<div class="abs" style="left:382px;top:11px;width:1px;height:9px;background:#fff"></div>
<svg class="abs" style="left:430px;top:7px" width="17" height="17" viewBox="0 0 17 17"><path d="M9 14.500h-7.500v-13h9.500v6" fill="none" stroke="#fff" stroke-width="1.200"/><path d="M1.500 5h9.500M1.500 8.500h8" stroke="#fff" stroke-width="1.100"/><path d="M8 13.500l5-5 2.500 2.500-5 5z" fill="#478ddc" stroke="#fff" stroke-width="1.200" stroke-linejoin="round"/><path d="M10.500 11l2.500 2.500" stroke="#fff" stroke-width="1"/></svg>
<div class="t" style="left:454px;top:7px;font-size:13px">组网模式</div>
<div class="t" style="right:9px;top:7px;font-size:13.500px">[ 旗舰版 ] Ver: 2.12.4</div>

</div>
<div class="abs" style="left:0;top:0;width:1495px;height:820px;border:1px solid #203e62;pointer-events:none"></div>
<div class="abs" style="left:0;top:0;width:1px;height:1px;background:#fff"></div><div class="abs" style="left:1494px;top:0;width:1px;height:1px;background:#fff"></div>
</body>
</html>
